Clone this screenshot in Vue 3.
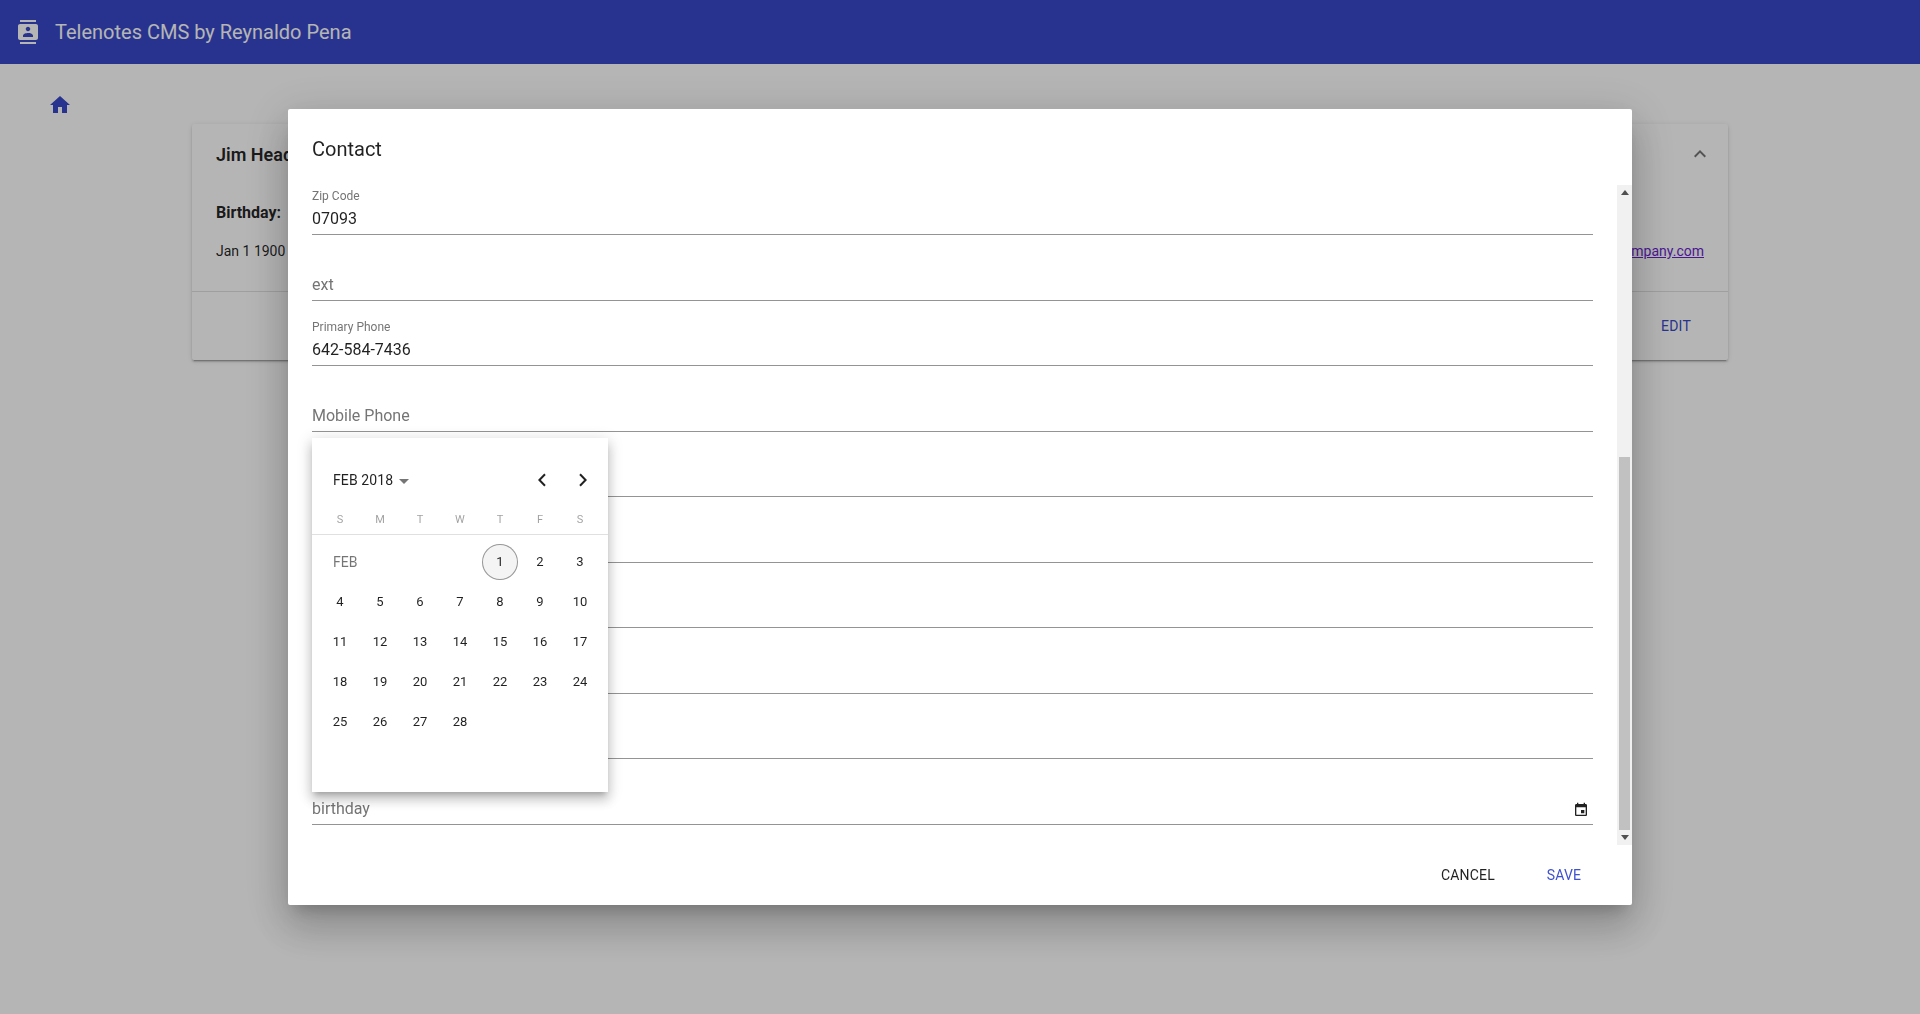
<script setup>
const fields = [
  { label: "Zip Code", value: "07093" },
  { placeholder: "ext" },
  { label: "Primary Phone", value: "642-584-7436" },
  { placeholder: "Mobile Phone" },
  {},
  {},
  {},
  {},
  {},
  { placeholder: "birthday", calendar: true },
];

const weekdays = ["S", "M", "T", "W", "T", "F", "S"];
const days = Array.from({ length: 28 }, (_, i) => i + 1);
</script>

<template>
  <div class="page">
    <header class="toolbar">
      <svg class="toolbar-icon" viewBox="0 0 24 24" width="24" height="24">
        <path d="M20 0H4v2h16V0zM4 24h16v-2H4v2zM20 4H4c-1.1 0-2 .9-2 2v12c0 1.1.9 2 2 2h16c1.1 0 2-.9 2-2V6c0-1.1-.9-2-2-2zm-8 2.75c1.24 0 2.25 1.01 2.25 2.25s-1.01 2.25-2.25 2.25S9.75 10.24 9.75 9 10.76 6.75 12 6.75zM17 17H7v-1.5c0-1.67 3.33-2.5 5-2.5s5 .83 5 2.5V17z" />
      </svg>
      <span class="toolbar-title">Telenotes CMS by Reynaldo Pena</span>
    </header>

    <main class="content">
      <svg class="home" viewBox="0 0 24 24" width="24" height="24">
        <path d="M10 20v-6h4v6h5v-8h3L12 3 2 12h3v8z" />
      </svg>

      <section class="card">
        <div class="card-head">
          <span class="card-name">Jim Headley</span>
          <svg viewBox="0 0 24 24" width="24" height="24">
            <path d="M12 8l-6 6 1.41 1.41L12 10.83l4.59 4.58L18 14z" />
          </svg>
        </div>
        <div class="card-body">
          <div>
            <div class="card-label">Birthday:</div>
            <div class="card-value">Jan 1 1900</div>
          </div>
          <div>
            <div class="card-label">Email:</div>
            <a class="card-value card-link" href="#">jim@company.com</a>
          </div>
        </div>
        <div class="card-actions">
          <span class="edit">EDIT</span>
        </div>
      </section>
    </main>

    <div class="overlay">
      <div class="dialog">
        <h2 class="dialog-title">Contact</h2>

        <div class="dialog-body">
          <div class="fields">
            <div v-for="(f, i) in fields" :key="i" class="field">
              <div v-if="f.label" class="field-label">{{ f.label }}</div>
              <div class="field-row">
                <span :class="f.value ? 'field-value' : 'field-placeholder'">{{ f.value || f.placeholder }}</span>
                <svg v-if="f.calendar" class="field-icon" viewBox="0 0 24 24" width="16" height="16">
                  <path d="M17 12h-5v5h5v-5zM16 1v2H8V1H6v2H5c-1.11 0-1.99.9-1.99 2L3 19c0 1.1.89 2 2 2h14c1.1 0 2-.9 2-2V5c0-1.1-.9-2-2-2h-1V1h-2zm3 18H5V8h14v11z" />
                </svg>
              </div>
            </div>
          </div>

          <div class="scrollbar">
            <div class="arrow arrow-up"></div>
            <div class="track"><div class="thumb"></div></div>
            <div class="arrow arrow-down"></div>
          </div>
        </div>

        <div class="dialog-actions">
          <button class="btn">CANCEL</button>
          <button class="btn btn-primary">SAVE</button>
        </div>

        <!-- datepicker popup -->
        <div class="picker">
          <div class="picker-head">
            <span class="picker-month">FEB 2018</span>
            <span class="picker-caret"></span>
            <span class="picker-spacer"></span>
            <button class="picker-nav">
              <svg viewBox="0 0 10 14" width="10" height="14"><path d="M8 1.2 2.4 7 8 12.8" /></svg>
            </button>
            <button class="picker-nav">
              <svg viewBox="0 0 10 14" width="10" height="14"><path d="M2 1.2 7.6 7 2 12.8" /></svg>
            </button>
          </div>

          <div class="picker-week">
            <span v-for="(d, i) in weekdays" :key="i">{{ d }}</span>
          </div>

          <div class="picker-days">
            <span class="picker-label">FEB</span>
            <span v-for="d in days" :key="d" class="day">
              <span :class="['day-inner', { today: d === 1 }]">{{ d }}</span>
            </span>
          </div>
        </div>
      </div>
    </div>
  </div>
</template>

<style>
html,
body {
  margin: 0;
  height: 100%;
  overflow: hidden;
  background: #fff;
}
</style>

<style scoped>
.page {
  height: 1014px;
  font-family: Roboto, "Liberation Sans", sans-serif;
  color: rgba(0, 0, 0, 0.87);
}

/* TOOLBAR */
.toolbar {
  height: 64px;
  background: #3849c8;
  display: flex;
  align-items: center;
  padding: 0 16px;
  box-sizing: border-box;
  color: #fff;
}
.toolbar-icon {
  fill: #fff;
  margin-right: 15px;
}
.toolbar-title {
  font-size: 20px;
  font-weight: 400;
}

/* PAGE CONTENT */
.content {
  padding: 29px 192px 0;
  position: relative;
}
.home {
  position: absolute;
  left: 48px;
  top: 29px;
  fill: #3849c8;
}
.card {
  margin-top: 31px;
  background: #fff;
  border-radius: 2px;
  box-shadow: 0 3px 1px -2px rgba(0, 0, 0, 0.2), 0 2px 2px 0 rgba(0, 0, 0, 0.14), 0 1px 5px 0 rgba(0, 0, 0, 0.12);
}
.card-head {
  height: 60px;
  padding: 0 16px 0 24px;
  display: flex;
  align-items: center;
  justify-content: space-between;
}
.card-head svg {
  fill: rgba(0, 0, 0, 0.54);
}
.card-name {
  font-size: 18px;
  font-weight: 600;
}
.card-body {
  height: 108px;
  box-sizing: border-box;
  padding: 19px 24px 0;
  display: flex;
  justify-content: space-between;
  border-bottom: 1px solid rgba(0, 0, 0, 0.12);
}
.card-label {
  font-size: 16px;
  font-weight: 700;
  line-height: 20px;
}
.card-value {
  display: block;
  margin-top: 18px;
  font-size: 14px;
  line-height: 20px;
}
.card-link {
  color: #6b1fd0;
}
.card-actions {
  height: 68px;
  display: flex;
  align-items: center;
  justify-content: flex-end;
  padding-right: 24px;
}
.edit {
  width: 56px;
  text-align: center;
  font-size: 14px;
  letter-spacing: 0.2px;
  color: #3849c8;
}

/* OVERLAY + DIALOG */
.overlay {
  position: fixed;
  inset: 0;
  background: rgba(0, 0, 0, 0.29);
  display: flex;
  align-items: center;
  justify-content: center;
}
.dialog {
  position: relative;
  width: 1344px;
  height: 796px;
  background: #fff;
  border-radius: 2px;
  display: flex;
  flex-direction: column;
  box-shadow: 0 11px 15px -7px rgba(0, 0, 0, 0.2), 0 24px 38px 3px rgba(0, 0, 0, 0.14), 0 9px 46px 8px rgba(0, 0, 0, 0.12);
}
.dialog-title {
  margin: 0;
  height: 76px;
  box-sizing: border-box;
  padding: 28px 24px 0;
  font-size: 20px;
  line-height: 24px;
  font-weight: 400;
}
.dialog-body {
  height: 660px;
  display: flex;
  overflow: hidden;
}
.fields {
  flex: 1;
  padding: 0 24px;
}

/* FIELD */
.field {
  height: 65.55px;
  box-sizing: border-box;
  display: flex;
  flex-direction: column;
  justify-content: flex-end;
  border-bottom: 1px solid #949494;
}
.field:first-child {
  height: 50px;
}
.field-label {
  font-size: 12px;
  line-height: 14px;
  color: #757575;
  margin-bottom: 3px;
}
.field-row {
  height: 28px;
  display: flex;
  align-items: center;
  justify-content: space-between;
  padding-bottom: 3px;
  box-sizing: border-box;
}
.field-value {
  font-size: 16px;
}
.field-placeholder {
  font-size: 16px;
  color: #757575;
}
.field-icon {
  fill: #212121;
  margin: 4px 4px 0 0;
}

/* SCROLLBAR */
.scrollbar {
  width: 15px;
  background: #f1f1f1;
  display: flex;
  flex-direction: column;
  align-items: center;
}
.arrow {
  height: 15px;
  flex: none;
  width: 15px;
  position: relative;
}
.arrow::after {
  content: "";
  position: absolute;
  left: 3.5px;
  border-left: 4px solid transparent;
  border-right: 4px solid transparent;
}
.arrow-up::after {
  top: 5px;
  border-bottom: 5px solid #505050;
}
.arrow-down::after {
  top: 5px;
  border-top: 5px solid #505050;
}
.track {
  flex: 1;
  width: 11px;
}
.thumb {
  height: 373px;
  margin-top: 257px;
  background: #c1c1c1;
}

/* ACTIONS */
.dialog-actions {
  flex: 1;
  display: flex;
  justify-content: flex-end;
  align-items: center;
  gap: 8px;
  padding-right: 24px;
}
.btn {
  width: 88px;
  height: 36px;
  padding: 0;
  border: none;
  background: none;
  font-family: inherit;
  font-size: 14px;
  letter-spacing: 0.2px;
  color: rgba(0, 0, 0, 0.87);
}
.btn-primary {
  color: #3f51d0;
}

/* DATEPICKER */
.picker {
  position: absolute;
  left: 24px;
  top: 329px;
  width: 296px;
  height: 354px;
  background: #fff;
  box-shadow: 0 5px 5px -3px rgba(0, 0, 0, 0.2), 0 8px 10px 1px rgba(0, 0, 0, 0.14), 0 3px 14px 2px rgba(0, 0, 0, 0.12);
}
.picker-head {
  height: 48px;
  padding: 18px 5px 0 21px;
  box-sizing: content-box;
  display: flex;
  align-items: center;
}
.picker-month {
  font-size: 14px;
  letter-spacing: 0.1px;
}
.picker-caret {
  margin-left: 6px;
  margin-top: 2px;
  border-left: 5px solid transparent;
  border-right: 5px solid transparent;
  border-top: 5px solid #757575;
}
.picker-spacer {
  flex: 1;
}
.picker-nav {
  width: 40px;
  height: 40px;
  margin-left: 1px;
  padding: 0;
  border: none;
  background: none;
  display: flex;
  align-items: center;
  justify-content: center;
}
.picker-nav svg {
  fill: none;
  stroke: rgba(0, 0, 0, 0.87);
  stroke-width: 2;
}
.picker-week {
  height: 31px;
  padding: 0 8px;
  box-sizing: border-box;
  display: grid;
  grid-template-columns: repeat(7, 40px);
  align-items: center;
  justify-items: center;
  font-size: 11px;
  color: rgba(0, 0, 0, 0.38);
  border-bottom: 1px solid rgba(0, 0, 0, 0.12);
}
.picker-days {
  padding: 7px 8px 0;
  display: grid;
  grid-template-columns: repeat(7, 40px);
  grid-auto-rows: 40px;
}
.picker-label {
  grid-column: span 4;
  align-self: center;
  padding-left: 13px;
  font-size: 14px;
  color: rgba(0, 0, 0, 0.54);
}
.day {
  display: flex;
  align-items: center;
  justify-content: center;
  font-size: 13px;
}
.day-inner {
  width: 36px;
  height: 36px;
  box-sizing: border-box;
  padding-bottom: 1px;
  border-radius: 50%;
  display: flex;
  align-items: center;
  justify-content: center;
}
.today {
  background: #f4f4f4;
  border: 1px solid rgba(0, 0, 0, 0.38);
}
</style>
